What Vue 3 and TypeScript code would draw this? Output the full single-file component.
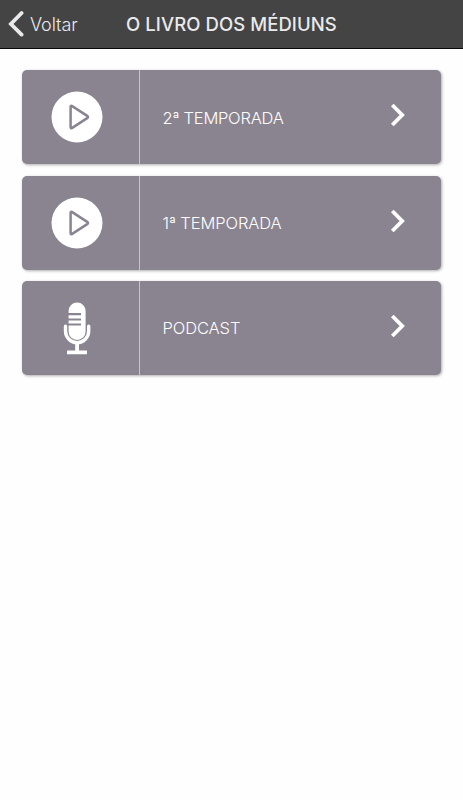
<script setup lang="ts">
interface Entry {
  label: string
  icon: 'play' | 'mic'
  tone: string
}

const entries: Entry[] = [
  { label: '2ª TEMPORADA', icon: 'play', tone: 'second' },
  { label: '1ª TEMPORADA', icon: 'play', tone: 'first' },
  { label: 'PODCAST', icon: 'mic', tone: 'podcast' },
]
</script>

<template>
  <div class="screen">
    <header class="bar">
      <button class="back" type="button">
        <svg class="back-icon" width="16" height="28" viewBox="0 0 16 28">
          <path d="M13.6 3 2.9 14 13.6 24.6" />
        </svg>
        <span class="back-label">Voltar</span>
      </button>
      <h1 class="title">O LIVRO DOS MÉDIUNS</h1>
    </header>
    <main class="list">
      <a v-for="entry in entries" :key="entry.label" class="card">
        <span class="thumb">
          <svg v-if="entry.icon === 'play'" width="52" height="52" viewBox="0 0 52 52">
            <circle cx="26" cy="26" r="25.5" fill="#fff" />
            <path class="play" d="M19.6 15.9 Q19.6 14.1 21.2 15.1 L36.2 24.9 Q37.8 26 36.2 27.1 L21.2 36.9 Q19.6 37.9 19.6 36.1 Z" />
          </svg>
          <svg v-else width="52" height="54" viewBox="0 0 52 54">
            <path
              fill="#fff"
              d="M17.6 9.9 a8.5 8.5 0 0 1 17 0 V30.4 a8.5 8.5 0 0 1 -17 0 V24.6 H30 V22.4 H17.6 V19.6 H30 V17.4 H17.6 V14.3 H30 V12.1 H17.6 Z"
            />
            <path class="stand" d="M14.5 25.2 V30 a11.6 11.6 0 0 0 23.2 0 V25.2" />
            <rect x="24.2" y="41" width="3.8" height="9" fill="#fff" />
            <rect x="16" y="49.5" width="20" height="3.8" rx="0.5" fill="#fff" />
          </svg>
        </span>
        <span class="content">
          <span class="label" :class="entry.tone">{{ entry.label }}</span>
          <svg class="arrow" width="16" height="24" viewBox="0 0 16 24">
            <path d="M2.3 2 12.2 12 2.3 22" />
          </svg>
        </span>
      </a>
    </main>
  </div>
</template>

<style>
body {
  margin: 0;
  background: #fefefe;
}
</style>

<style scoped>
.screen {
  min-height: 800px;
  font-family: Inter, 'Liberation Sans', sans-serif;
}
.bar {
  box-sizing: border-box;
  height: 49px;
  display: flex;
  align-items: center;
  background: #444;
  border-bottom: 1px solid #080808;
  color: #eaeaec;
}
.back {
  display: flex;
  align-items: center;
  width: 126px;
  padding: 0 0 0 8px;
  border: 0;
  background: none;
  color: inherit;
  font: inherit;
}
.back-icon {
  margin-bottom: 1px;
}
.back-icon path {
  fill: none;
  stroke: #eaeaec;
  stroke-width: 3.8;
  stroke-linecap: round;
  stroke-linejoin: miter;
}
.back-label {
  margin-left: 6px;
  font-size: 18px;
  font-weight: 300;
  letter-spacing: -0.1px;
}
.title {
  margin: 0;
  font-size: 18.5px;
  font-weight: 500;
  letter-spacing: 0.08px;
  white-space: nowrap;
}
.list {
  display: flex;
  flex-direction: column;
  gap: 11.4px;
  padding: 21.3px 22.4px 0;
}
.card {
  display: flex;
  height: 94px;
  border-radius: 5px;
  background: #8a8490;
  box-shadow: 1px 1px 3px rgba(0, 0, 0, 0.32);
}
.thumb {
  box-sizing: border-box;
  width: 117.6px;
  padding-right: 7.6px;
  display: flex;
  align-items: center;
  justify-content: center;
  border-right: 1px solid #c6c3ca;
}
.play {
  fill: none;
  stroke: #8a8490;
  stroke-width: 2.5;
  stroke-linejoin: round;
}
.stand {
  fill: none;
  stroke: #fff;
  stroke-width: 3.4;
  stroke-linecap: round;
}
.content {
  flex: 1;
  display: flex;
  align-items: center;
  justify-content: space-between;
  padding: 0 34.6px 0 22.6px;
}
.label {
  color: #fff;
  font-size: 16.5px;
  font-weight: 350;
  letter-spacing: -0.24px;
}
.second {
  padding-top: 1px;
}
.first {
  letter-spacing: -0.1px;
}
.podcast {
  letter-spacing: -0.12px;
}
.arrow {
  margin-bottom: 4px;
}
.arrow path {
  fill: none;
  stroke: #fff;
  stroke-width: 3.8;
}
</style>
